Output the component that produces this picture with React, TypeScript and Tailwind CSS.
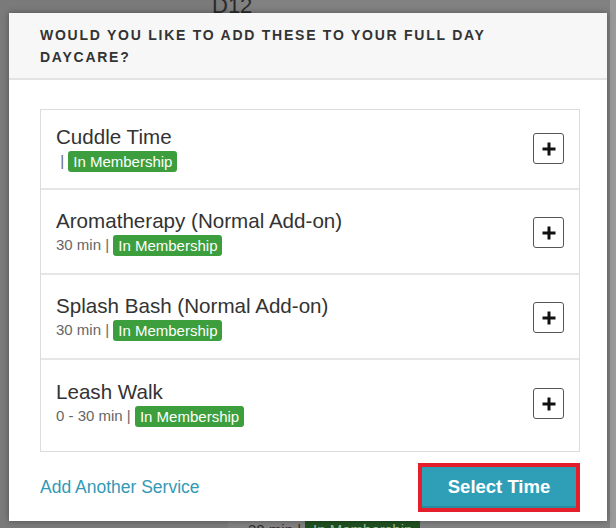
import React from "react";

const rows = [
  { title: "Cuddle Time", meta: "", pad: "pt-[15px] pb-[16px]" },
  { title: "Aromatherapy (Normal Add-on)", meta: "30 min", pad: "pt-[19px] pb-[17px]" },
  { title: "Splash Bash (Normal Add-on)", meta: "30 min", pad: "pt-[19px] pb-[17px]" },
  { title: "Leash Walk", meta: "0 - 30 min", pad: "pt-[20px] pb-[24px]" },
];

function PlusBtn() {
  return (
    <button className="w-[31px] h-[31px] border border-[#555] rounded-[3px] bg-white flex items-center justify-center shrink-0">
      <svg width="16" height="16" viewBox="0 0 16 16">
        <path d="M8 1.5v13M1.5 8h13" stroke="#111" strokeWidth="3" />
      </svg>
    </button>
  );
}

export default function App() {
  return (
    <div
      className="relative w-[616px] h-[528px] overflow-hidden bg-[#808080]"
      style={{ fontFamily: '"Liberation Sans", Arial, sans-serif' }}
    >
      {/* background page (dimmed) */}
      <div className="absolute inset-0 flex">
        <div className="w-[228px] h-full bg-[#7a7a7a]" />
        <div className="flex-1 h-full bg-[#818181]" />
        <div className="w-[6px] h-full bg-[#9a9a9a]" />
      </div>
      <div className="absolute left-[212px] top-[-11px] text-[22px] text-[#2a2a2a]">D12</div>
      <div className="absolute left-[248px] top-[519px] flex items-center gap-1 text-[15px] text-[#2a2a2a]">
        <span>30 min |</span>
        <span className="bg-[#1f4f20] text-[#9ab89a] px-2 rounded-[3px]">In Membership</span>
      </div>

      {/* modal */}
      <div className="absolute left-[9px] top-[13px] w-[598px] h-[508px] bg-white shadow-[0_0_6px_rgba(0,0,0,0.35)] flex flex-col">
        <div className="h-[67px] shrink-0 bg-[#f7f7f7] border-b-2 border-[#e3e3e3] pl-[31px] pr-6 pt-[11px]">
          <div className="text-[14px] leading-[22px] font-bold tracking-[1.75px] text-[#333] uppercase">
            Would you like to add these to your full day
            <br />
            daycare?
          </div>
        </div>

        <div className="pl-[31px] pr-[27px] pt-[29px] shrink-0">
          <div className="border border-[#dcdcdc]">
            {rows.map((r, i) => (
              <div
                key={i}
                className={`flex items-center pl-[15px] pr-[15px] ${r.pad} ${i > 0 ? "border-t-2 border-[#e6e6e6]" : ""}`}
              >
                <div className="flex-1">
                  <div className="text-[20.6px] leading-[24px] text-[#333]">{r.title}</div>
                  <div className="flex items-center text-[15px] leading-[22px] text-[#666] mt-[1px]">
                    <span className="whitespace-pre">{r.meta ? r.meta + " | " : " | "}</span>
                    <span className="bg-[#3c9e3c] text-white rounded-[3px] px-[5px] leading-[21px]">
                      In Membership
                    </span>
                  </div>
                </div>
                <PlusBtn />
              </div>
            ))}
          </div>
        </div>

        <div className="flex items-center justify-between pl-[31px] pr-[27px] mt-[11px] shrink-0">
          <span className="text-[17.5px] text-[#3399b4]">Add Another Service</span>
          <div className="border-[4px] border-[#e41f2b] p-0">
            <button className="w-[154px] h-[41px] bg-[#2f9fb8] text-white font-bold text-[18.5px] border-b-2 border-[#2a8aa0]">
              Select Time
            </button>
          </div>
        </div>
      </div>
    </div>
  );
}
